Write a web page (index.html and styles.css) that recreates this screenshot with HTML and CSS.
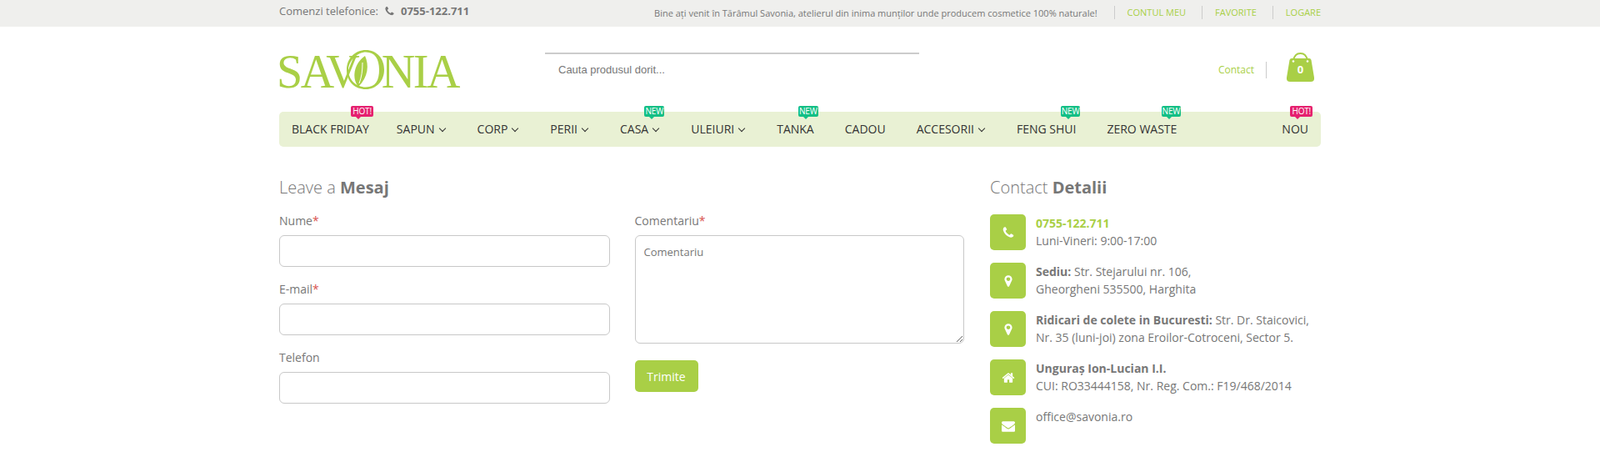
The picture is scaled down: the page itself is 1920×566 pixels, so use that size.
FILE: index.html
```html
<!DOCTYPE html>
<html lang="ro">
<head>
    <meta charset="UTF-8">
    <meta name="viewport" content="width=device-width, initial-scale=1.0">
    <title>Savonia - Contact</title>
    <link rel="stylesheet" href="styles.css">
</head>
<body>
    <div class="topbar">
        <div class="wrap topbar-inner">
            <div class="top-phone">
                <span>Comenzi telefonice:</span>
                <svg class="top-phone-icon" viewBox="0 0 1792 1792"><path d="M1600 1240q0 27-10 70.5t-21 68.5q-21 50-122 106-94 51-186 51-27 0-53-3.5t-57.5-12.5-47-14.5-55.5-20.5-49-18q-98-35-175-83-127-79-264-216t-216-264q-48-77-83-175-3-9-18-49t-20.5-55.5-14.5-47-12.5-57.5-3.5-53q0-92 51-186 56-101 106-122 25-11 68.5-21t70.5-10q14 0 21 3 18 6 53 76 11 19 30 54t35 63.5 31 53.5q3 4 17.5 25t21.5 35.5 7 28.5q0 20-28.5 50t-62 55-62 53-28.5 46q0 9 5 22.5t8.5 20.5 14 24 11.5 19q76 137 174 235t235 174q2 1 19 11.5t24 14 20.5 8.5 22.5 5q18 0 46-28.5t53-62 55-62 50-28.5q14 0 28.5 7t35.5 21.5 25 17.5q25 15 53.5 31t63.5 35 54 30q70 35 76 53 3 7 3 21z"/></svg>
                <b>0755-122.711</b>
            </div>
            <div class="top-right">
                <span class="welcome">Bine ați venit în Tărâmul Savonia, atelierul din inima munților unde producem cosmetice 100% naturale!</span>
                <a class="top-link" href="#">CONTUL MEU</a>
                <a class="top-link" href="#">FAVORITE</a>
                <a class="top-link" href="#">LOGARE</a>
            </div>
        </div>
    </div>

    <div class="wrap header">
        <a class="logo" href="#" aria-label="Savonia">
            <span>SAV</span>
            <svg class="logo-o" viewBox="0 0 46 47">
                <path fill-rule="evenodd" d="M24 0C37 0 46 10 46 23.500S37 47 24 47 1 38 1 24 11 0 24 0zM24 2.500C14 2.500 3 13 3 24s9 20.500 21 20.500S40 36 40 23.500 35 2.500 24 2.500z"/>
                <path d="M23 7C28 18 27 32 15 44 7 34 9 17 23 7z"/>
                <path class="logo-vein" d="M20 15C20 25 19 32 16 40"/>
            </svg>
            <span>NIA</span>
        </a>
        <div class="search">Cauta produsul dorit...</div>
        <div class="header-right">
            <a class="header-contact" href="#">Contact</a>
            <div class="bag">
                <svg class="bag-icon" viewBox="0 0 33 35">
                    <path d="M6 7h21q2 0 2.500 2L33 30q.5 5-4 5H4q-4.500 0-4-5L3.500 9Q4 7 6 7z"/>
                    <path class="bag-handle" d="M8 10C9 3 12 1 16.500 1S24 3 25 10"/>
                    <circle class="bag-dot" cx="8" cy="10.500" r="1.300"/>
                    <circle class="bag-dot" cx="25" cy="10.500" r="1.300"/>
                </svg>
                <span class="bag-count">0</span>
            </div>
        </div>
    </div>

    <div class="wrap">
        <nav class="nav">
            <a class="nav-item nav-first" href="#">BLACK FRIDAY<span class="badge hot">HOT!</span></a>
            <a class="nav-item drop" href="#">SAPUN</a>
            <a class="nav-item drop" href="#">CORP</a>
            <a class="nav-item drop" href="#">PERII</a>
            <a class="nav-item drop" href="#">CASA<span class="badge new">NEW</span></a>
            <a class="nav-item drop" href="#">ULEIURI</a>
            <a class="nav-item" href="#">TANKA<span class="badge new">NEW</span></a>
            <a class="nav-item" href="#">CADOU</a>
            <a class="nav-item drop" href="#">ACCESORII</a>
            <a class="nav-item" href="#">FENG SHUI<span class="badge new">NEW</span></a>
            <a class="nav-item" href="#">ZERO WASTE<span class="badge new">NEW</span></a>
            <a class="nav-item nav-last" href="#">NOU<span class="badge hot">HOT!</span></a>
        </nav>
    </div>

    <div class="wrap content">
        <div class="message">
            <h3 class="title">Leave a <b>Mesaj</b></h3>
            <form class="form-grid">
                <div class="form-col">
                    <label class="field">
                        <span>Nume<i>*</i></span>
                        <input type="text">
                    </label>
                    <label class="field">
                        <span>E-mail<i>*</i></span>
                        <input type="text">
                    </label>
                    <label class="field">
                        <span>Telefon</span>
                        <input type="text">
                    </label>
                </div>
                <div class="form-col">
                    <label class="field">
                        <span>Comentariu<i>*</i></span>
                        <textarea placeholder="Comentariu"></textarea>
                    </label>
                    <button class="send" type="button">Trimite</button>
                </div>
            </form>
        </div>

        <div class="details">
            <h3 class="title">Contact <b>Detalii</b></h3>
            <div class="detail">
                <span class="detail-icon"><svg class="icon-phone" viewBox="0 0 1792 1792"><path d="M1600 1240q0 27-10 70.5t-21 68.5q-21 50-122 106-94 51-186 51-27 0-53-3.5t-57.5-12.5-47-14.5-55.5-20.5-49-18q-98-35-175-83-127-79-264-216t-216-264q-48-77-83-175-3-9-18-49t-20.5-55.5-14.5-47-12.5-57.5-3.5-53q0-92 51-186 56-101 106-122 25-11 68.5-21t70.5-10q14 0 21 3 18 6 53 76 11 19 30 54t35 63.5 31 53.5q3 4 17.5 25t21.5 35.5 7 28.5q0 20-28.5 50t-62 55-62 53-28.5 46q0 9 5 22.5t8.5 20.5 14 24 11.5 19q76 137 174 235t235 174q2 1 19 11.5t24 14 20.5 8.5 22.5 5q18 0 46-28.5t53-62 55-62 50-28.5q14 0 28.5 7t35.5 21.5 25 17.5q25 15 53.5 31t63.5 35 54 30q70 35 76 53 3 7 3 21z"/></svg></span>
                <p><b class="green">0755-122.711</b><br>Luni-Vineri: 9:00-17:00</p>
            </div>
            <div class="detail">
                <span class="detail-icon"><svg viewBox="0 0 1792 1792"><path d="M1152 640q0-106-75-181t-181-75-181 75-75 181 75 181 181 75 181-75 75-181zm256 0q0 109-33 179l-364 774q-16 33-47.500 52t-67.500 19-67.500-19-46.500-52l-365-774q-33-70-33-179 0-212 150-362t362-150 362 150 150 362z"/></svg></span>
                <p><b>Sediu:</b> Str. Stejarului nr. 106,<br>Gheorgheni 535500, Harghita</p>
            </div>
            <div class="detail">
                <span class="detail-icon"><svg viewBox="0 0 1792 1792"><path d="M1152 640q0-106-75-181t-181-75-181 75-75 181 75 181 181 75 181-75 75-181zm256 0q0 109-33 179l-364 774q-16 33-47.500 52t-67.500 19-67.500-19-46.500-52l-365-774q-33-70-33-179 0-212 150-362t362-150 362 150 150 362z"/></svg></span>
                <p><b>Ridicari de colete in Bucuresti:</b> Str. Dr. Staicovici,<br>Nr. 35 (luni-joi) zona Eroilor-Cotroceni, Sector 5.</p>
            </div>
            <div class="detail">
                <span class="detail-icon"><svg viewBox="0 0 1792 1792"><path d="M1472 992v480q0 26-19 45t-45 19h-384v-384h-256v384h-384q-26 0-45-19t-19-45v-480q0-1 .5-3t.5-3l575-474 575 474q1 2 1 6zm223-69l-62 74q-8 9-21 11h-3q-13 0-21-7l-692-577-692 577q-12 8-24 7-13-2-21-11l-62-74q-8-10-7-23.500t11-21.500l719-599q32-26 76-26t76 26l244 204v-195q0-14 9-23t23-9h192q14 0 23 9t9 23v408l219 182q10 8 11 21.500t-7 23.500z"/></svg></span>
                <p><b>Unguraș Ion-Lucian I.I.</b><br>CUI: RO33444158, Nr. Reg. Com.: F19/468/2014</p>
            </div>
            <div class="detail">
                <span class="detail-icon"><svg viewBox="0 0 1792 1792"><path d="M1792 710v794q0 66-47 113t-113 47h-1472q-66 0-113-47t-47-113v-794q44 49 101 87 362 246 497 345 57 42 92.500 65.500t94.500 48 110 24.500h2q51 0 110-24.500t94.500-48 92.500-65.500q170-123 498-345 57-39 100-87zm0-294q0 79-49 151t-122 123q-376 261-468 325-10 7-42.500 30.500t-54 38-52 32.500-57.500 27-50 9h-2q-23 0-50-9t-57.500-27-52-32.500-54-38-42.500-30.500q-91-64-262-182.500t-205-142.500q-62-42-117-115.500t-55-136.500q0-78 41.500-130t118.500-52h1472q65 0 112.500 47t47.500 113z"/></svg></span>
                <p>office@savonia.ro</p>
            </div>
        </div>
    </div>
</body>
</html>
```

FILE: styles.css
```css
* {
    box-sizing: border-box;
}
html, body {
    height: 100%;
}
body {
    margin: 0;
    overflow: hidden;
    font-family: "Open Sans", Arial, sans-serif;
    font-size: 14px;
    color: #777;
    background-color: #fff;
}
a {
    text-decoration: none;
    color: inherit;
}
.wrap {
    width: 1250px;
    margin: 0 auto;
}

/* top bar */
.topbar {
    height: 32px;
    background-color: #efefed;
}
.topbar-inner {
    display: flex;
    justify-content: space-between;
    align-items: flex-start;
    height: 100%;
}
.top-phone {
    display: flex;
    align-items: center;
    height: 26px;
    font-size: 13px;
}
.top-phone-icon {
    width: 13px;
    height: 13px;
    margin: 0 7px;
    fill: #777;
}
.top-right {
    display: flex;
    align-items: center;
    height: 30px;
    font-size: 11px;
}
.welcome {
    margin-right: 20px;
}
.top-link {
    color: #a9cf46;
    border-left: 1px solid #ccc;
    padding-left: 15px;
    margin-left: 19px;
    line-height: 16px;
}
.top-link:first-of-type {
    margin-left: 0;
}

/* header */
.header {
    display: flex;
    height: 102px;
}
.logo {
    display: flex;
    align-items: flex-start;
    width: 322px;
    height: 50px;
    margin: 27px 0 0 -3px;
    font-family: "Liberation Serif", serif;
    font-size: 56px;
    line-height: 55px;
    letter-spacing: -2.5px;
    color: #a9cf46;
}
.logo-o {
    flex: none;
    width: 46px;
    height: 47px;
    margin: 1px -3px 0 -14.5px;
    fill: #a9cf46;
}
.logo-vein {
    fill: none;
    stroke: #fff;
    stroke-width: 1;
}
.search {
    width: 449px;
    height: 50px;
    margin-top: 31px;
    padding: 10px 16px;
    border-top: 2px solid #ccc;
    font-family: "Liberation Sans", Arial, sans-serif;
    font-size: 13px;
    line-height: 17px;
}
.header-right {
    display: flex;
    flex: 1;
    justify-content: flex-end;
    align-items: flex-start;
}
.header-contact {
    margin-top: 42px;
    padding-right: 14px;
    border-right: 1px solid #ccc;
    font-size: 12px;
    line-height: 20px;
    color: #a9cf46;
}
.bag {
    position: relative;
    width: 33px;
    height: 35px;
    margin: 31px 8px 0 24px;
}
.bag-icon {
    display: block;
    width: 33px;
    height: 35px;
    fill: #a9cf46;
}
.bag-handle {
    fill: none;
    stroke: #a9cf46;
    stroke-width: 2;
}
.bag-dot {
    fill: #fff;
}
.bag-count {
    position: absolute;
    left: 0;
    right: 0;
    top: 12px;
    text-align: center;
    font-size: 13px;
    line-height: 16px;
    font-weight: 700;
    color: #fff;
}

/* menu */
.nav {
    display: flex;
    height: 42px;
    padding: 0 15px;
    gap: 37px;
    background-color: #e9f1d4;
    border-radius: 5px;
}
.nav-item {
    position: relative;
    display: flex;
    align-items: center;
    color: #333;
    line-height: 42px;
}
.nav-first {
    margin-right: -4px;
}
.drop::after {
    content: "";
    width: 5px;
    height: 5px;
    margin: -2px 2px 0 6px;
    border-right: 1px solid #333;
    border-bottom: 1px solid #333;
    transform: rotate(45deg);
}
.nav-last {
    margin-left: auto;
}
.badge {
    position: absolute;
    top: -7px;
    right: -5px;
    height: 13px;
    padding: 0 2px;
    border-radius: 2px;
    font-size: 10px;
    line-height: 13px;
    letter-spacing: -0.2px;
    color: #fff;
}
.badge::after {
    content: "";
    position: absolute;
    left: 6px;
    bottom: -3px;
    border-style: solid;
    border-width: 3px 3px 0 3px;
    border-color: inherit;
    border-left-color: transparent;
    border-right-color: transparent;
}
.hot {
    background-color: #e5206f;
    border-color: #e5206f;
}
.new {
    padding: 0 1px;
    background-color: #13bf85;
    border-color: #13bf85;
}

/* content */
.content {
    display: flex;
    gap: 31px;
    padding-top: 35px;
}
.message {
    width: 822px;
}
.details {
    flex: 1;
}
.title {
    margin: 0 0 19px;
    font-size: 20px;
    line-height: 27px;
    font-weight: 300;
    color: #777;
}
.message .title {
    margin-bottom: 17px;
}
.title b {
    font-weight: 700;
}
.form-grid {
    display: flex;
    gap: 30px;
}
.form-col:first-child {
    width: 397px;
}
.form-col:last-child {
    width: 396px;
}
.field {
    display: block;
    margin-bottom: 17px;
}
.field span {
    display: block;
    margin-bottom: 8px;
    line-height: 19px;
}
.field i {
    color: #d9534f;
    font-style: normal;
}
.field input,
.field textarea {
    display: block;
    width: 100%;
    border: 1px solid #c8c8c8;
    border-radius: 6px;
    background-color: #fff;
    font-family: "Open Sans", Arial, sans-serif;
    font-size: 13px;
    color: #777;
}
.field input {
    height: 38px;
}
.field textarea {
    height: 130px;
    padding: 10px;
    line-height: 18px;
}
.field textarea::placeholder {
    color: #777;
    opacity: 1;
}
.send {
    display: block;
    width: 76px;
    height: 38px;
    margin-top: 20px;
    padding: 0;
    border: 0;
    border-radius: 5px;
    background-color: #a9cf46;
    font-family: "Open Sans", Arial, sans-serif;
    font-size: 14px;
    color: #fff;
}
.detail {
    display: flex;
    gap: 12px;
    height: 43px;
    margin-bottom: 15px;
}
.detail-icon {
    display: flex;
    flex: none;
    justify-content: center;
    align-items: center;
    width: 43px;
    height: 43px;
    border-radius: 5px;
    background-color: #a9cf46;
}
.detail-icon svg {
    width: 16px;
    height: 16px;
    fill: #fff;
}
.detail p {
    margin: 0;
    line-height: 21px;
}
.green {
    color: #a9cf46;
}
```
